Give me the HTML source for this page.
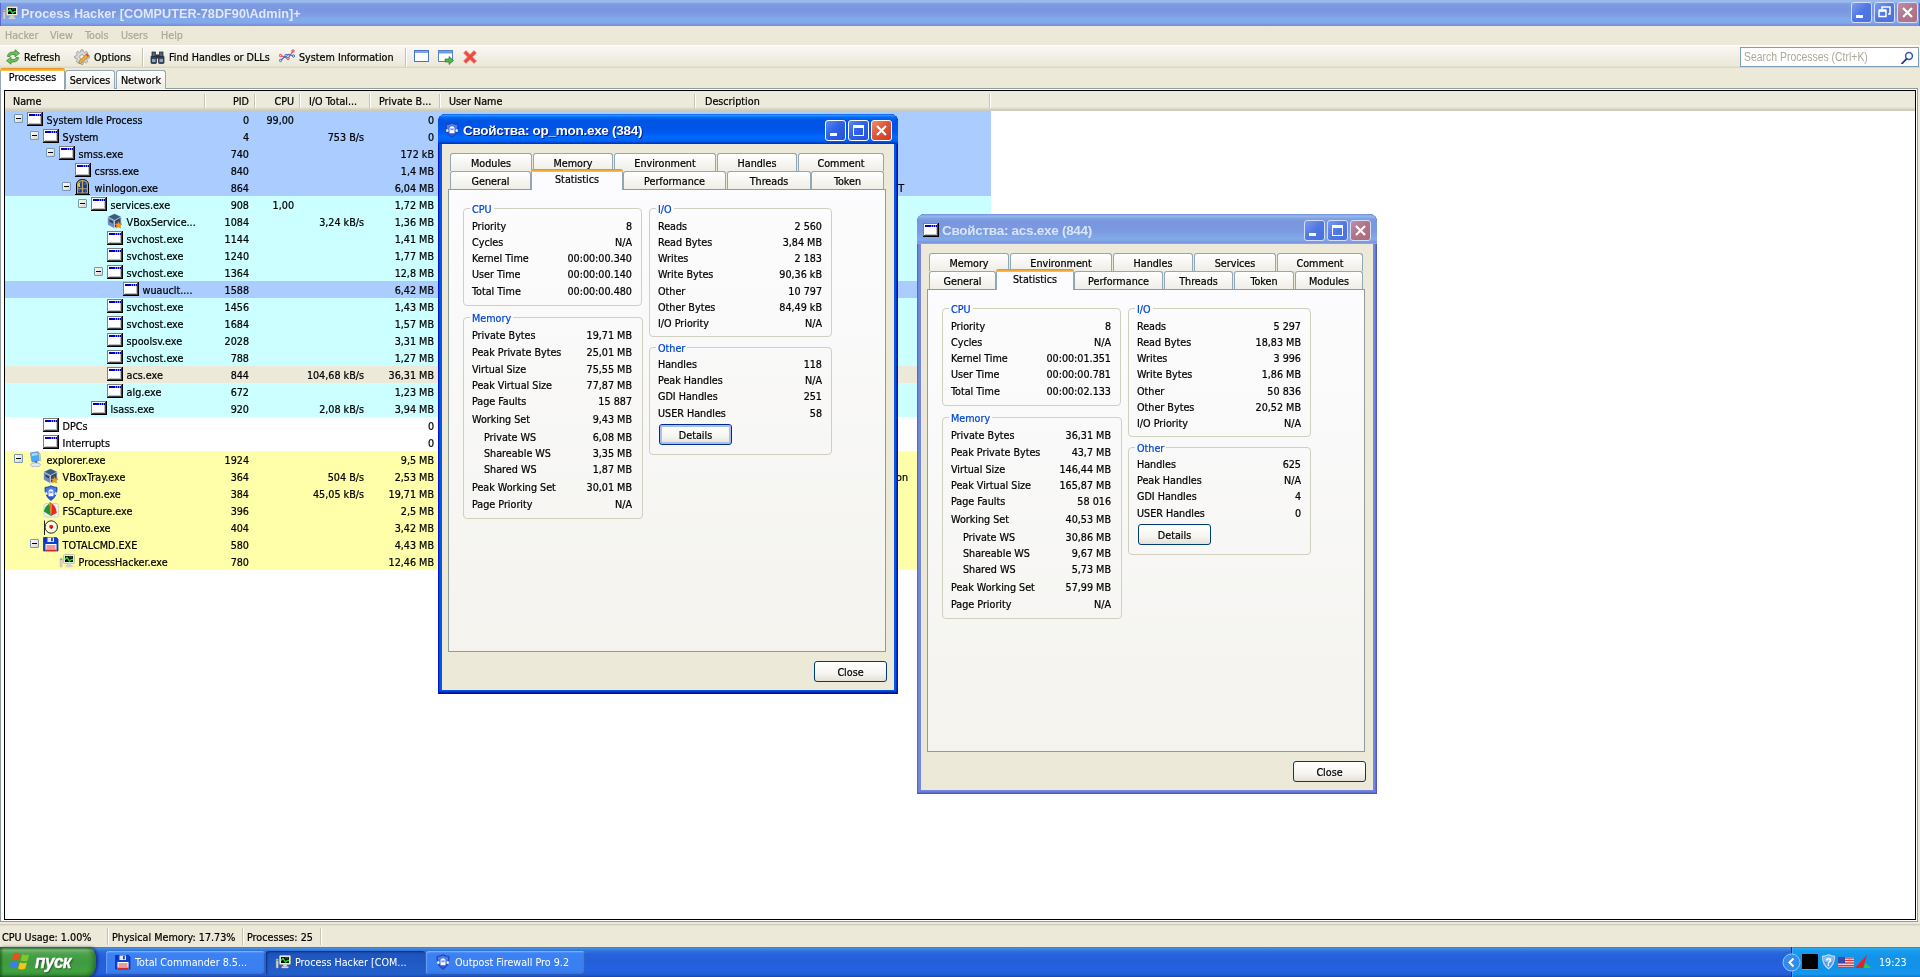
<!DOCTYPE html>
<html lang="ru"><head><meta charset="utf-8"><title>Process Hacker</title>
<style>
*{box-sizing:border-box;margin:0;padding:0}
html,body{width:1920px;height:977px;overflow:hidden}
body{background:#ece9d8;font:10.7px "DejaVu Sans Condensed","Liberation Sans",sans-serif;color:#000;position:relative;cursor:default;-webkit-text-stroke:.22px currentColor}
i{font-style:normal}
svg{display:block}
.abs{position:absolute}
#root{position:absolute;left:0;top:0;width:1920px;height:977px;will-change:transform}
#title{position:absolute;left:0;top:0;width:1920px;height:26px;background:linear-gradient(#9ab4ea 0,#9ebdeb 6%,#8db3ea 10%,#7f9fe5 14%,#7c99e1 22%,#7a96df 40%,#7e9be3 55%,#80a3e7 65%,#82a9ea 72%,#82a9ea 86%,#7f9fe7 91%,#7a93df 95%,#708cdf 100%)}
#title .ti{position:absolute;left:2px;top:5px}
#title .tt{position:absolute;left:21px;top:5px;-webkit-text-stroke:0;font:bold 12.7px/18px "Liberation Sans",sans-serif;color:#dfe7fa;white-space:nowrap}
.cb{position:absolute;top:6px;width:21px;height:21px;border:1px solid #fff;border-radius:3px;background:linear-gradient(135deg,#5b8af2 0,#2f62e6 45%,#2552d6 100%)}
.cb.cl{background:linear-gradient(135deg,#f0906c 0,#e0553a 45%,#c93a20 100%)}
.cb.cl svg{position:absolute;left:-1px;top:-1px}
.cb.mn i{position:absolute;left:4px;top:12px;width:7px;height:3px;background:#fff}
.cb.mx i{position:absolute;left:4px;top:4px;width:11px;height:11px;border:1px solid #fff;border-top-width:3px}
#title .cb{top:2px;border-color:#d4ddf6;background:linear-gradient(135deg,#7c9bee 0,#4f78e4 50%,#4a70dc 100%)}
#title .cb.cl{background:linear-gradient(135deg,#bd8ea6 0,#b0778a 50%,#b07080 100%)}
#menu{position:absolute;left:0;top:26px;width:1920px;height:19px;background:#ece9d8;color:#aca899;line-height:19px}
#menu span{position:absolute;top:0}
#toolbar{position:absolute;left:0;top:45px;width:1920px;height:23px;background:linear-gradient(#fff 0,#f8f7f2 8%,#f1efe5 50%,#ece9d8 90%,#d5d2c3 100%)}
#toolbar .ic{position:absolute;top:4px}
#toolbar .tx{position:absolute;top:4px;line-height:17px;white-space:nowrap}
#toolbar .sep{position:absolute;top:3px;width:2px;height:19px;border-left:1px solid #c5c2b2;border-right:1px solid #fff}
#search{position:absolute;left:1740px;top:47px;width:179px;height:20px;background:#fff;border:1px solid #7f9db9;color:#aca899;font:12.500px/19px "Liberation Sans",sans-serif;padding-left:3px;white-space:nowrap;-webkit-text-stroke:0}
#search span{display:inline-block;transform-origin:0 50%;transform:scaleX(.835)}
#search svg{position:absolute;left:160px;top:3px}
.mtab{position:absolute;top:70px;height:19px;border:1px solid #91a7b4;border-bottom:none;border-radius:3px 3px 0 0;background:linear-gradient(#fff,#f5f4ef 60%,#ecebe6);text-align:center;line-height:20px}
#mpane{position:absolute;left:0;top:88px;width:1918px;height:834px;background:#fff;border:1px solid #919b9c;border-right-color:#919b9c}
.mtab.sel{top:68px;height:22px;background:#fff;border-top:none;line-height:20px}
.mtab.sel:before{content:"";position:absolute;left:-1px;right:-1px;top:0;height:3px;border-radius:3px 3px 0 0;background:linear-gradient(#e68b2c,#ffc73c)}
#tree{position:absolute;left:4px;top:90px;width:1912px;height:830px;border:1px solid #000;background:#fff;overflow:hidden}
#hdr{position:absolute;left:0;top:0;width:1910px;height:20px;background:linear-gradient(#ebeadb 0,#ebeadb 80%,#e2decd 85%,#d6d2c2 92%,#cbc7b8 100%);line-height:21px}
#hdr span{position:absolute;top:2px;line-height:17px;white-space:nowrap}
#hdr i{position:absolute;top:3px;width:2px;height:14px;border-left:1px solid #c7c5b2;border-right:1px solid #fff}
.row{position:absolute;left:0;width:986px;height:17px;line-height:17px;white-space:nowrap}
.row span{position:absolute;top:1px;line-height:17px}
.row .ic{top:0}
.row .r{text-align:right}
.pm{position:absolute;top:3px;width:9px;height:9px;border:1px solid #7898b5;border-radius:1px;background:linear-gradient(135deg,#fff,#d8d4c4)}
.pm:after{content:"";position:absolute;left:1px;top:3px;width:5px;height:1px;background:#000}
#status{position:absolute;left:0;top:924px;width:1920px;height:23px;background:linear-gradient(#c5c2b2 0,#ece9d8 2px,#ece9d8 100%)}
#status span{position:absolute;top:5px;line-height:17px;white-space:nowrap}
#status i{position:absolute;top:4px;width:2px;height:17px;border-left:1px solid #c5c2b2;border-right:1px solid #fff}
#taskbar{-webkit-text-stroke:0;position:absolute;left:0;top:947px;width:1920px;height:30px;background:linear-gradient(#3168d5 0,#4993e6 3%,#3a80e0 8%,#2b71dd 14%,#2663da 25%,#245edb 50%,#2562df 75%,#245ddb 90%,#1f52c3 96%,#1941a5 100%)}
#start{position:absolute;left:0;top:0;width:96px;height:30px;border-radius:0 7px 8px 0/0 13px 15px 0;background:linear-gradient(#2f7d2f 0,#4a9a4a 5%,#78b878 11%,#5aa85a 17%,#44a044 28%,#3f9b3f 55%,#41a241 80%,#3a933a 92%,#2c782c 100%);box-shadow:inset -3px 0 4px rgba(0,40,0,.35),inset 2px 0 2px rgba(0,50,0,.4),2px 0 3px rgba(0,0,60,.5)}
#start .tx{position:absolute;left:35px;top:1px;font:italic bold 19px/28px "Liberation Sans",sans-serif;color:#fff;-webkit-text-stroke:.4px #fff;text-shadow:1px 1px 2px #1c4a1c;letter-spacing:-.6px;transform-origin:0 50%;transform:scaleX(.9)}
.tbn{position:absolute;top:4px;height:24px;width:159px;border-radius:3px;background:linear-gradient(#5b9bf3 0,#3c81f3 12%,#3a7ff1 80%,#3273e0 100%);box-shadow:inset 1px 1px 1px rgba(255,255,255,.25),inset -1px -1px 1px rgba(0,0,60,.25);color:#fff;line-height:24px;white-space:nowrap}
.tbn.on{background:linear-gradient(#1c52b8 0,#1e56c0 20%,#2360cc 100%);box-shadow:inset 1px 1px 2px rgba(0,0,40,.5)}
.tbn .ic{position:absolute;left:9px;top:3px}
.tbn .tx{position:absolute;left:29px;top:0}
#tray{position:absolute;left:1791px;top:0;width:129px;height:30px;border-left:1px solid #0a3a9a;background:linear-gradient(#1682d8 0,#2aa8f4 5%,#1a9cee 12%,#1394ea 30%,#1292e8 70%,#1498ee 90%,#0e78cc 100%);box-shadow:inset 1px 0 0 #3aa8f4}
#clock{position:absolute;left:1879px;top:7px;color:#fff;line-height:18px}
/* dialogs */
.dlg{position:absolute;width:460px;height:580px;border-radius:8px 8px 0 0;overflow:hidden}
.dlg.act{background:#0855dd;box-shadow:inset 0 -1px 0 #00138c,inset 1px 0 0 #0019cf,inset -1px 0 0 #00138c,inset 0 -2px 0 #001fb0,inset 0 -3px 0 #0038d8,inset 2px 0 0 #0845d8,inset -2px 0 0 #0031c8}
.dlg.ina{background:#7488de;box-shadow:inset 0 -1px 0 #5058c6,inset 1px 0 0 #5a66ca,inset -1px 0 0 #5058c6,inset 0 -2px 0 #5f6cd2,inset 0 -3px 0 #6c7eda,inset 2px 0 0 #6e82dc,inset -2px 0 0 #6272d4}
.dlg .tb{position:absolute;left:0;top:0;width:460px;height:30px}
.dlg.act .tb{background:linear-gradient(#0058ee 0,#3593ff 4%,#288eff 6%,#127dff 8%,#036ffc 10%,#0262ee 14%,#0057e5 20%,#0054e3 24%,#0055eb 56%,#005bf5 66%,#026afe 76%,#0064f4 88%,#0056e2 93%,#0038c8 97%,#002fc0 100%)}
.dlg.ina .tb{background:linear-gradient(#7697e7 0,#7e9ee3 3%,#94afe8 6%,#97b4e9 8%,#82a5e4 14%,#7c9fe2 17%,#7996de 25%,#7b99e1 56%,#82a9e9 81%,#80a5e7 89%,#7b96e1 94%,#7a93df 97%,#abbae3 100%)}
.dlg .ti{position:absolute;left:6px;top:8px}
.dlg .tt{position:absolute;left:25px;top:8px;-webkit-text-stroke:0;font:bold 13.500px/18px "Liberation Sans",sans-serif;letter-spacing:-.28px;color:#fff;white-space:nowrap;text-shadow:1px 1px 0 #0a1883}
.dlg.ina .tt{color:#d8e4f8;text-shadow:none}
.dlg.ina .cb{border-color:#d4ddf6;background:linear-gradient(135deg,#7c9bee 0,#4f78e4 50%,#4a70dc 100%)}
.dlg.ina .cb.cl{background:linear-gradient(135deg,#be92a8 0,#b07488 45%,#b06a78 100%)}
.dlg .cli{position:absolute;left:4px;top:30px;width:452px;height:546px;background:#ece9d8}
.tab{position:absolute;height:18px;border:1px solid #91a7b4;border-bottom:none;border-radius:3px 3px 0 0;background:linear-gradient(#fff,#f7f6f2 50%,#eeede7);text-align:center;line-height:20px;white-space:nowrap;overflow:hidden}
.tab.seltab{height:21px;background:#fcfcfe;border-top:none;line-height:21px;z-index:2;overflow:visible}
.tab.lo{height:18px;line-height:19px}
.tab.seltab:before{content:"";position:absolute;left:-1px;right:-1px;top:0;height:3px;border-radius:3px 3px 0 0;background:linear-gradient(#e68b2c,#ffc73c)}
.pane{position:absolute;border:1px solid #919b9c;background:linear-gradient(#fcfcfe,#f4f3ee);box-sizing:content-box}
.gb{position:absolute;border:1px solid #d0d0bf;border-radius:4px;margin:0;padding:0 0 0 6px;min-width:0}
.gb legend{color:#0046d5;padding:2px 2px 0 2px;line-height:13px;height:15px;white-space:nowrap}
.gl{position:absolute;color:#0046d5;background:#f9f9f7;height:14px;line-height:14px;padding-left:2px;white-space:nowrap}
.sl,.sv{position:absolute;line-height:16px;white-space:nowrap}
.sv{width:120px;text-align:right}
.btn{position:absolute;height:19px;border:1px solid #003c74;border-radius:3px;background:linear-gradient(#fff 0,#f6f5f0 60%,#e4e1d4 100%);text-align:center;line-height:21px;box-sizing:content-box}
.btn.def{box-shadow:inset 0 0 0 2px #a8c0f0;border-color:#002c8a}
</style></head><body><div id="root">
<div id="title"><i class="abs" style="left:0;top:3px;width:1px;height:23px;background:#5c68d0"></i><i class="abs" style="left:1919px;top:3px;width:1px;height:23px;background:#5c68d0"></i><span class="ti"><svg width="16" height="16" viewBox="0 0 16 16"><rect x="4.500" y="1.500" width="11" height="9" rx="1" fill="#ece8da" stroke="#b8b4a4" stroke-width=".8"/><rect x="6" y="3" width="8" height="6" fill="#000"/><path d="M6 6.500l2-2 2.500 3.500 2-1.500h1.500" stroke="#18e028" stroke-width="1.500" fill="none"/><rect x="10" y="3.500" width="3.500" height="1" fill="#667"/><path d="M8.500 10.500h3l.8 2h-4.600z" fill="#dcd8c8"/><rect x="6.500" y="12.500" width="7" height="1.500" rx=".7" fill="#e4e0d0" stroke="#b8b4a4" stroke-width=".4"/><rect x="1.200" y="5" width="2" height="9" rx=".5" fill="#e0dccc" stroke="#a8a494" stroke-width=".5"/><rect x="1.500" y="6" width="1.500" height="1" fill="#28c838"/></svg></span><span class="tt">Process Hacker [COMPUTER-78DF90\Admin]+</span>
<span class="cb mn" style="left:1851px"><i></i></span><span class="cb rs" style="left:1874px"><svg width="21" height="21" viewBox="0 0 21 21" style="position:absolute;left:-1px;top:-1px"><path d="M8 7V5h8v7h-2" fill="none" stroke="#fff" stroke-width="1.500"/><rect x="5" y="8.500" width="7" height="6" fill="none" stroke="#fff" stroke-width="1.500"/><path d="M5 8.500h7" stroke="#fff" stroke-width="2.500"/></svg></span><span class="cb cl" style="left:1897px"><svg width="21" height="21" viewBox="0 0 21 21"><path d="M6 6l9 9M15 6l-9 9" stroke="#fff" stroke-width="2.200"/></svg></span></div>
<div id="menu"><span style="left:5px">Hacker</span><span style="left:50px">View</span><span style="left:85px">Tools</span><span style="left:121px">Users</span><span style="left:161px">Help</span></div>
<div id="toolbar">
<span class="ic" style="left:5px"><svg width="16" height="16" viewBox="0 0 16 16"><path d="M2.500 7.500C2.500 4.500 5 3 7.500 3H10V.8L14.500 4.300 10 7.800V5.500H7.500C6 5.500 5 6.300 5 7.500z" fill="#6fbf5f" stroke="#3b8a34" stroke-width=".8"/><path d="M13.500 8.500c0 3-2.500 4.500-5 4.500H6v2.200L1.500 11.700 6 8.200v2.300h2.500c1.500 0 2.500-.8 2.500-2z" fill="#6fbf5f" stroke="#3b8a34" stroke-width=".8"/></svg></span><span class="tx" style="left:24px">Refresh</span>
<span class="ic" style="left:74px"><svg width="16" height="16" viewBox="0 0 16 16"><path d="M7 .8h2l.4 1.900 1.300.6 1.700-1 1.400 1.400-1 1.700.6 1.300 1.900.4v2l-1.900.4-.6 1.300 1 1.700-1.400 1.400-1.700-1-1.300.6-.4 1.900H7l-.4-1.900-1.300-.6-1.700 1-1.400-1.400 1-1.700-.6-1.300L.700 9.100v-2l1.900-.4.600-1.300-1-1.700 1.400-1.400 1.700 1 1.300-.6z" fill="#d8d8d8" stroke="#8a8a8a" stroke-width=".7"/><circle cx="8" cy="8" r="2.300" fill="#f4f4f4" stroke="#8a8a8a" stroke-width=".7"/><path d="M5 14.500l1-3 7-7 2 2-7 7z" fill="#f5b12e" stroke="#a8660a" stroke-width=".7"/><path d="M5 14.500l1-3 2 2z" fill="#f9e3b0" stroke="#a8660a" stroke-width=".5"/><path d="M12.300 5.200l2 2" stroke="#d04a3a" stroke-width="1.600"/></svg></span><span class="tx" style="left:94px">Options</span>
<i class="sep" style="left:142px"></i>
<span class="ic" style="left:150px;top:5px"><svg width="15" height="15" viewBox="0 0 15 15"><rect x="1" y="6" width="5.500" height="7.500" rx="1" fill="#3a4658" stroke="#1a2230" stroke-width=".7"/><rect x="8.500" y="6" width="5.500" height="7.500" rx="1" fill="#3a4658" stroke="#1a2230" stroke-width=".7"/><rect x="2" y="2" width="3.500" height="4.500" fill="#566274" stroke="#1a2230" stroke-width=".7"/><rect x="9.500" y="2" width="3.500" height="4.500" fill="#566274" stroke="#1a2230" stroke-width=".7"/><rect x="6" y="4.500" width="3" height="4" fill="#2a3444"/><rect x="2" y="9" width="3.500" height="3" fill="#7fa6d8"/><rect x="9.500" y="9" width="3.500" height="3" fill="#7fa6d8"/></svg></span><span class="tx" style="left:169px">Find Handles or DLLs</span>
<span class="ic" style="left:279px"><svg width="16" height="16" viewBox="0 0 16 16"><path d="M1.500 6.500L6.500 8.500 9 9.500 14 2" stroke="#e0453a" stroke-width="1.200" fill="none"/><path d="M1.500 11.500L7 6.500 9.500 5.500 14.500 7" stroke="#3b6fd0" stroke-width="1.200" fill="none"/><circle cx="1.500" cy="6.500" r="1.200" fill="#fbd" stroke="#d8302a" stroke-width=".8"/><circle cx="9" cy="9.500" r="1.200" fill="#fbd" stroke="#d8302a" stroke-width=".8"/><circle cx="14" cy="2" r="1.200" fill="#fbd" stroke="#d8302a" stroke-width=".8"/><circle cx="1.500" cy="11.500" r="1.200" fill="#cdf" stroke="#2a5cc0" stroke-width=".8"/><circle cx="7" cy="6.500" r="1.200" fill="#cdf" stroke="#2a5cc0" stroke-width=".8"/><circle cx="14.500" cy="7" r="1.200" fill="#cdf" stroke="#2a5cc0" stroke-width=".8"/></svg></span><span class="tx" style="left:299px">System Information</span>
<i class="sep" style="left:405px"></i>
<span class="ic" style="left:414px"><svg width="16" height="16" viewBox="0 0 16 16"><rect x=".5" y="1.500" width="14" height="11" fill="#fdfdff" stroke="#4a72c8"/><rect x="1" y="2" width="13" height="2" fill="#7fa4ec"/></svg></span><span class="ic" style="left:438px"><svg width="16" height="16" viewBox="0 0 16 16"><rect x=".5" y="1.500" width="14" height="11" fill="#fff" stroke="#5b7fc0"/><rect x="1" y="2" width="13" height="2.500" fill="#6f9be8"/><path d="M7 10h4V7.500l4.500 4-4.500 4V13H7z" fill="#4fb848" stroke="#2a7a28" stroke-width=".7"/></svg></span><span class="ic" style="left:462px"><svg width="16" height="16" viewBox="0 0 16 16"><path d="M1.500 4L4 1.500 8 5.500 12 1.500 14.500 4 10.500 8 14.500 12 12 14.500 8 10.500 4 14.500 1.500 12 5.500 8z" fill="#ee4a40" stroke="#e88" stroke-width=".6"/></svg></span>
</div>
<div id="search"><span>Search Processes (Ctrl+K)</span><svg width="13" height="13" viewBox="0 0 13 13"><circle cx="8" cy="5" r="3.400" fill="#fff" stroke="#2f5bb8" stroke-width="1.500"/><path d="M5.500 7.800L1 12.500" stroke="#1a3a8a" stroke-width="1.800" stroke-linecap="round"/></svg></div>
<div id="mpane"></div>
<span class="mtab" style="left:65px;width:50px">Services</span><span class="mtab" style="left:116px;width:50px">Network</span>
<span class="mtab sel" style="left:0;width:65px">Processes</span>
<div id="tree">
<div id="hdr"><span style="left:8px">Name</span><i style="left:199px"></i><span style="right:1666px">PID</span><i style="left:249px"></i><span style="right:1621px">CPU</span><i style="left:294px"></i><span style="left:304px">I/O Total...</span><i style="left:364px"></i><span style="left:374px">Private B...</span><i style="left:434px"></i><span style="left:444px">User Name</span><i style="left:689px"></i><span style="left:700px">Description</span><i style="left:984px"></i></div>
<div class="row" style="top:20px;background:#aaccff"><i class="pm" style="left:9px"></i><span class="ic" style="left:22px"><svg width="16" height="16" viewBox="0 0 16 16"><rect x="0" y="1" width="16" height="14" fill="#000"/><rect x="0" y="1" width="15" height="13" fill="#808080"/><rect x="1" y="2" width="14" height="12" fill="#404040"/><rect x="1" y="2" width="13" height="11" fill="#fff"/><rect x="2" y="3" width="12" height="10" fill="#c0c0c0"/><rect x="2" y="3" width="11" height="9" fill="#fff"/><rect x="2" y="3" width="12" height="2" fill="#0000c0"/><rect x="8" y="3.500" width="1" height="1" fill="#fff"/><rect x="10" y="3.500" width="1" height="1" fill="#fff"/><rect x="12" y="3.500" width="1" height="1" fill="#fff"/><rect x="0" y="14" width="16" height="1" fill="#000"/></svg></span><span class="nm" style="left:41.6px">System Idle Process</span><span class="r" style="right:742px">0</span><span class="r" style="right:697px">99,00</span><span class="r" style="right:557px">0</span></div>
<div class="row" style="top:37px;background:#aaccff"><i class="pm" style="left:25px"></i><span class="ic" style="left:38px"><svg width="16" height="16" viewBox="0 0 16 16"><rect x="0" y="1" width="16" height="14" fill="#000"/><rect x="0" y="1" width="15" height="13" fill="#808080"/><rect x="1" y="2" width="14" height="12" fill="#404040"/><rect x="1" y="2" width="13" height="11" fill="#fff"/><rect x="2" y="3" width="12" height="10" fill="#c0c0c0"/><rect x="2" y="3" width="11" height="9" fill="#fff"/><rect x="2" y="3" width="12" height="2" fill="#0000c0"/><rect x="8" y="3.500" width="1" height="1" fill="#fff"/><rect x="10" y="3.500" width="1" height="1" fill="#fff"/><rect x="12" y="3.500" width="1" height="1" fill="#fff"/><rect x="0" y="14" width="16" height="1" fill="#000"/></svg></span><span class="nm" style="left:57.6px">System</span><span class="r" style="right:742px">4</span><span class="r" style="right:627px">753 B/s</span><span class="r" style="right:557px">0</span></div>
<div class="row" style="top:54px;background:#aaccff"><i class="pm" style="left:41px"></i><span class="ic" style="left:54px"><svg width="16" height="16" viewBox="0 0 16 16"><rect x="0" y="1" width="16" height="14" fill="#000"/><rect x="0" y="1" width="15" height="13" fill="#808080"/><rect x="1" y="2" width="14" height="12" fill="#404040"/><rect x="1" y="2" width="13" height="11" fill="#fff"/><rect x="2" y="3" width="12" height="10" fill="#c0c0c0"/><rect x="2" y="3" width="11" height="9" fill="#fff"/><rect x="2" y="3" width="12" height="2" fill="#0000c0"/><rect x="8" y="3.500" width="1" height="1" fill="#fff"/><rect x="10" y="3.500" width="1" height="1" fill="#fff"/><rect x="12" y="3.500" width="1" height="1" fill="#fff"/><rect x="0" y="14" width="16" height="1" fill="#000"/></svg></span><span class="nm" style="left:73.6px">smss.exe</span><span class="r" style="right:742px">740</span><span class="r" style="right:557px">172 kB</span></div>
<div class="row" style="top:71px;background:#aaccff"><span class="ic" style="left:70px"><svg width="16" height="16" viewBox="0 0 16 16"><rect x="0" y="1" width="16" height="14" fill="#000"/><rect x="0" y="1" width="15" height="13" fill="#808080"/><rect x="1" y="2" width="14" height="12" fill="#404040"/><rect x="1" y="2" width="13" height="11" fill="#fff"/><rect x="2" y="3" width="12" height="10" fill="#c0c0c0"/><rect x="2" y="3" width="11" height="9" fill="#fff"/><rect x="2" y="3" width="12" height="2" fill="#0000c0"/><rect x="8" y="3.500" width="1" height="1" fill="#fff"/><rect x="10" y="3.500" width="1" height="1" fill="#fff"/><rect x="12" y="3.500" width="1" height="1" fill="#fff"/><rect x="0" y="14" width="16" height="1" fill="#000"/></svg></span><span class="nm" style="left:89.6px">csrss.exe</span><span class="r" style="right:742px">840</span><span class="r" style="right:557px">1,4 MB</span></div>
<div class="row" style="top:88px;background:#aaccff"><i class="pm" style="left:57px"></i><span class="ic" style="left:70px"><svg width="16" height="16" viewBox="0 0 16 16"><path d="M1.500 15V6C1.500 2.500 4 .5 7.500 .5S13.500 2.500 13.500 6V15z" fill="#b8b060" stroke="#000" stroke-width="1"/><path d="M3.200 13.500V6.200C3.200 4 4.600 2.500 6.800 2.200V13.500z" fill="#1a2fa0"/><path d="M8.200 2.200C10.400 2.500 11.800 4 11.800 6.200V13.500H8.200z" fill="#1a2fa0"/><rect x="2.500" y="9.300" width="10" height="1" fill="#b8b060"/><path d="M5.800 3.800A2.300 2.300 0 1 0 5.800 8.200 2.800 2.800 0 0 1 5.800 3.800z" fill="#f4d838"/><rect x="9.500" y="4.500" width="1" height="1" fill="#f4d838"/><rect x="4" y="11" width="1" height="1" fill="#4a8ae0"/><rect x="10" y="11.500" width="1" height="1" fill="#4a8ae0"/><rect x="0" y="15" width="15" height="1" fill="#000"/></svg></span><span class="nm" style="left:89.6px">winlogon.exe</span><span class="r" style="right:742px">864</span><span class="r" style="right:557px">6,04 MB</span><span class="r" style="right:87px">NT</span></div>
<div class="row" style="top:105px;background:#ccffff"><i class="pm" style="left:73px"></i><span class="ic" style="left:86px"><svg width="16" height="16" viewBox="0 0 16 16"><rect x="0" y="1" width="16" height="14" fill="#000"/><rect x="0" y="1" width="15" height="13" fill="#808080"/><rect x="1" y="2" width="14" height="12" fill="#404040"/><rect x="1" y="2" width="13" height="11" fill="#fff"/><rect x="2" y="3" width="12" height="10" fill="#c0c0c0"/><rect x="2" y="3" width="11" height="9" fill="#fff"/><rect x="2" y="3" width="12" height="2" fill="#0000c0"/><rect x="8" y="3.500" width="1" height="1" fill="#fff"/><rect x="10" y="3.500" width="1" height="1" fill="#fff"/><rect x="12" y="3.500" width="1" height="1" fill="#fff"/><rect x="0" y="14" width="16" height="1" fill="#000"/></svg></span><span class="nm" style="left:105.6px">services.exe</span><span class="r" style="right:742px">908</span><span class="r" style="right:697px">1,00</span><span class="r" style="right:557px">1,72 MB</span></div>
<div class="row" style="top:122px;background:#ccffff"><span class="ic" style="left:102px"><svg width="16" height="16" viewBox="0 0 16 16"><path d="M7.500 1L14 4v7.500L7.500 15 1 11.500V4z" fill="#2c4c6c" stroke="#b8c8dc" stroke-width=".9"/><path d="M7.500 1L14 4 7.500 7.500 1 4z" fill="#3a5c80"/><path d="M7.500 7.500V15L1 11.500V4z" fill="#6f8cb4"/><path d="M1 4l6.500 3.500L14 4M7.500 7.500V15" stroke="#d0dcec" stroke-width=".8" fill="none"/><path d="M2.500 6.500l3.500 2v2l-3.500-2z" fill="#243c58"/><path d="M11.500 8.500l1.100 2.300 2.400.2-1.800 1.700.5 2.400-2.200-1.200-2.200 1.200.5-2.400-1.800-1.700 2.400-.2z" fill="#f89a1c" stroke="#c86a00" stroke-width=".4"/></svg></span><span class="nm" style="left:121.6px">VBoxService...</span><span class="r" style="right:742px">1084</span><span class="r" style="right:627px">3,24 kB/s</span><span class="r" style="right:557px">1,36 MB</span></div>
<div class="row" style="top:139px;background:#ccffff"><span class="ic" style="left:102px"><svg width="16" height="16" viewBox="0 0 16 16"><rect x="0" y="1" width="16" height="14" fill="#000"/><rect x="0" y="1" width="15" height="13" fill="#808080"/><rect x="1" y="2" width="14" height="12" fill="#404040"/><rect x="1" y="2" width="13" height="11" fill="#fff"/><rect x="2" y="3" width="12" height="10" fill="#c0c0c0"/><rect x="2" y="3" width="11" height="9" fill="#fff"/><rect x="2" y="3" width="12" height="2" fill="#0000c0"/><rect x="8" y="3.500" width="1" height="1" fill="#fff"/><rect x="10" y="3.500" width="1" height="1" fill="#fff"/><rect x="12" y="3.500" width="1" height="1" fill="#fff"/><rect x="0" y="14" width="16" height="1" fill="#000"/></svg></span><span class="nm" style="left:121.6px">svchost.exe</span><span class="r" style="right:742px">1144</span><span class="r" style="right:557px">1,41 MB</span></div>
<div class="row" style="top:156px;background:#ccffff"><span class="ic" style="left:102px"><svg width="16" height="16" viewBox="0 0 16 16"><rect x="0" y="1" width="16" height="14" fill="#000"/><rect x="0" y="1" width="15" height="13" fill="#808080"/><rect x="1" y="2" width="14" height="12" fill="#404040"/><rect x="1" y="2" width="13" height="11" fill="#fff"/><rect x="2" y="3" width="12" height="10" fill="#c0c0c0"/><rect x="2" y="3" width="11" height="9" fill="#fff"/><rect x="2" y="3" width="12" height="2" fill="#0000c0"/><rect x="8" y="3.500" width="1" height="1" fill="#fff"/><rect x="10" y="3.500" width="1" height="1" fill="#fff"/><rect x="12" y="3.500" width="1" height="1" fill="#fff"/><rect x="0" y="14" width="16" height="1" fill="#000"/></svg></span><span class="nm" style="left:121.6px">svchost.exe</span><span class="r" style="right:742px">1240</span><span class="r" style="right:557px">1,77 MB</span></div>
<div class="row" style="top:173px;background:#ccffff"><i class="pm" style="left:89px"></i><span class="ic" style="left:102px"><svg width="16" height="16" viewBox="0 0 16 16"><rect x="0" y="1" width="16" height="14" fill="#000"/><rect x="0" y="1" width="15" height="13" fill="#808080"/><rect x="1" y="2" width="14" height="12" fill="#404040"/><rect x="1" y="2" width="13" height="11" fill="#fff"/><rect x="2" y="3" width="12" height="10" fill="#c0c0c0"/><rect x="2" y="3" width="11" height="9" fill="#fff"/><rect x="2" y="3" width="12" height="2" fill="#0000c0"/><rect x="8" y="3.500" width="1" height="1" fill="#fff"/><rect x="10" y="3.500" width="1" height="1" fill="#fff"/><rect x="12" y="3.500" width="1" height="1" fill="#fff"/><rect x="0" y="14" width="16" height="1" fill="#000"/></svg></span><span class="nm" style="left:121.6px">svchost.exe</span><span class="r" style="right:742px">1364</span><span class="r" style="right:557px">12,8 MB</span></div>
<div class="row" style="top:190px;background:#aaccff"><span class="ic" style="left:118px"><svg width="16" height="16" viewBox="0 0 16 16"><rect x="0" y="1" width="16" height="14" fill="#000"/><rect x="0" y="1" width="15" height="13" fill="#808080"/><rect x="1" y="2" width="14" height="12" fill="#404040"/><rect x="1" y="2" width="13" height="11" fill="#fff"/><rect x="2" y="3" width="12" height="10" fill="#c0c0c0"/><rect x="2" y="3" width="11" height="9" fill="#fff"/><rect x="2" y="3" width="12" height="2" fill="#0000c0"/><rect x="8" y="3.500" width="1" height="1" fill="#fff"/><rect x="10" y="3.500" width="1" height="1" fill="#fff"/><rect x="12" y="3.500" width="1" height="1" fill="#fff"/><rect x="0" y="14" width="16" height="1" fill="#000"/></svg></span><span class="nm" style="left:137.6px">wuauclt....</span><span class="r" style="right:742px">1588</span><span class="r" style="right:557px">6,42 MB</span></div>
<div class="row" style="top:207px;background:#ccffff"><span class="ic" style="left:102px"><svg width="16" height="16" viewBox="0 0 16 16"><rect x="0" y="1" width="16" height="14" fill="#000"/><rect x="0" y="1" width="15" height="13" fill="#808080"/><rect x="1" y="2" width="14" height="12" fill="#404040"/><rect x="1" y="2" width="13" height="11" fill="#fff"/><rect x="2" y="3" width="12" height="10" fill="#c0c0c0"/><rect x="2" y="3" width="11" height="9" fill="#fff"/><rect x="2" y="3" width="12" height="2" fill="#0000c0"/><rect x="8" y="3.500" width="1" height="1" fill="#fff"/><rect x="10" y="3.500" width="1" height="1" fill="#fff"/><rect x="12" y="3.500" width="1" height="1" fill="#fff"/><rect x="0" y="14" width="16" height="1" fill="#000"/></svg></span><span class="nm" style="left:121.6px">svchost.exe</span><span class="r" style="right:742px">1456</span><span class="r" style="right:557px">1,43 MB</span></div>
<div class="row" style="top:224px;background:#ccffff"><span class="ic" style="left:102px"><svg width="16" height="16" viewBox="0 0 16 16"><rect x="0" y="1" width="16" height="14" fill="#000"/><rect x="0" y="1" width="15" height="13" fill="#808080"/><rect x="1" y="2" width="14" height="12" fill="#404040"/><rect x="1" y="2" width="13" height="11" fill="#fff"/><rect x="2" y="3" width="12" height="10" fill="#c0c0c0"/><rect x="2" y="3" width="11" height="9" fill="#fff"/><rect x="2" y="3" width="12" height="2" fill="#0000c0"/><rect x="8" y="3.500" width="1" height="1" fill="#fff"/><rect x="10" y="3.500" width="1" height="1" fill="#fff"/><rect x="12" y="3.500" width="1" height="1" fill="#fff"/><rect x="0" y="14" width="16" height="1" fill="#000"/></svg></span><span class="nm" style="left:121.6px">svchost.exe</span><span class="r" style="right:742px">1684</span><span class="r" style="right:557px">1,57 MB</span></div>
<div class="row" style="top:241px;background:#ccffff"><span class="ic" style="left:102px"><svg width="16" height="16" viewBox="0 0 16 16"><rect x="0" y="1" width="16" height="14" fill="#000"/><rect x="0" y="1" width="15" height="13" fill="#808080"/><rect x="1" y="2" width="14" height="12" fill="#404040"/><rect x="1" y="2" width="13" height="11" fill="#fff"/><rect x="2" y="3" width="12" height="10" fill="#c0c0c0"/><rect x="2" y="3" width="11" height="9" fill="#fff"/><rect x="2" y="3" width="12" height="2" fill="#0000c0"/><rect x="8" y="3.500" width="1" height="1" fill="#fff"/><rect x="10" y="3.500" width="1" height="1" fill="#fff"/><rect x="12" y="3.500" width="1" height="1" fill="#fff"/><rect x="0" y="14" width="16" height="1" fill="#000"/></svg></span><span class="nm" style="left:121.6px">spoolsv.exe</span><span class="r" style="right:742px">2028</span><span class="r" style="right:557px">3,31 MB</span></div>
<div class="row" style="top:258px;background:#ccffff"><span class="ic" style="left:102px"><svg width="16" height="16" viewBox="0 0 16 16"><rect x="0" y="1" width="16" height="14" fill="#000"/><rect x="0" y="1" width="15" height="13" fill="#808080"/><rect x="1" y="2" width="14" height="12" fill="#404040"/><rect x="1" y="2" width="13" height="11" fill="#fff"/><rect x="2" y="3" width="12" height="10" fill="#c0c0c0"/><rect x="2" y="3" width="11" height="9" fill="#fff"/><rect x="2" y="3" width="12" height="2" fill="#0000c0"/><rect x="8" y="3.500" width="1" height="1" fill="#fff"/><rect x="10" y="3.500" width="1" height="1" fill="#fff"/><rect x="12" y="3.500" width="1" height="1" fill="#fff"/><rect x="0" y="14" width="16" height="1" fill="#000"/></svg></span><span class="nm" style="left:121.6px">svchost.exe</span><span class="r" style="right:742px">788</span><span class="r" style="right:557px">1,27 MB</span></div>
<div class="row" style="top:275px;background:#ece9d8"><span class="ic" style="left:102px"><svg width="16" height="16" viewBox="0 0 16 16"><rect x="0" y="1" width="16" height="14" fill="#000"/><rect x="0" y="1" width="15" height="13" fill="#808080"/><rect x="1" y="2" width="14" height="12" fill="#404040"/><rect x="1" y="2" width="13" height="11" fill="#fff"/><rect x="2" y="3" width="12" height="10" fill="#c0c0c0"/><rect x="2" y="3" width="11" height="9" fill="#fff"/><rect x="2" y="3" width="12" height="2" fill="#0000c0"/><rect x="8" y="3.500" width="1" height="1" fill="#fff"/><rect x="10" y="3.500" width="1" height="1" fill="#fff"/><rect x="12" y="3.500" width="1" height="1" fill="#fff"/><rect x="0" y="14" width="16" height="1" fill="#000"/></svg></span><span class="nm" style="left:121.6px">acs.exe</span><span class="r" style="right:742px">844</span><span class="r" style="right:627px">104,68 kB/s</span><span class="r" style="right:557px">36,31 MB</span></div>
<div class="row" style="top:292px;background:#ccffff"><span class="ic" style="left:102px"><svg width="16" height="16" viewBox="0 0 16 16"><rect x="0" y="1" width="16" height="14" fill="#000"/><rect x="0" y="1" width="15" height="13" fill="#808080"/><rect x="1" y="2" width="14" height="12" fill="#404040"/><rect x="1" y="2" width="13" height="11" fill="#fff"/><rect x="2" y="3" width="12" height="10" fill="#c0c0c0"/><rect x="2" y="3" width="11" height="9" fill="#fff"/><rect x="2" y="3" width="12" height="2" fill="#0000c0"/><rect x="8" y="3.500" width="1" height="1" fill="#fff"/><rect x="10" y="3.500" width="1" height="1" fill="#fff"/><rect x="12" y="3.500" width="1" height="1" fill="#fff"/><rect x="0" y="14" width="16" height="1" fill="#000"/></svg></span><span class="nm" style="left:121.6px">alg.exe</span><span class="r" style="right:742px">672</span><span class="r" style="right:557px">1,23 MB</span></div>
<div class="row" style="top:309px;background:#ccffff"><span class="ic" style="left:86px"><svg width="16" height="16" viewBox="0 0 16 16"><rect x="0" y="1" width="16" height="14" fill="#000"/><rect x="0" y="1" width="15" height="13" fill="#808080"/><rect x="1" y="2" width="14" height="12" fill="#404040"/><rect x="1" y="2" width="13" height="11" fill="#fff"/><rect x="2" y="3" width="12" height="10" fill="#c0c0c0"/><rect x="2" y="3" width="11" height="9" fill="#fff"/><rect x="2" y="3" width="12" height="2" fill="#0000c0"/><rect x="8" y="3.500" width="1" height="1" fill="#fff"/><rect x="10" y="3.500" width="1" height="1" fill="#fff"/><rect x="12" y="3.500" width="1" height="1" fill="#fff"/><rect x="0" y="14" width="16" height="1" fill="#000"/></svg></span><span class="nm" style="left:105.6px">lsass.exe</span><span class="r" style="right:742px">920</span><span class="r" style="right:627px">2,08 kB/s</span><span class="r" style="right:557px">3,94 MB</span></div>
<div class="row" style="top:326px;background:#ffffff"><span class="ic" style="left:38px"><svg width="16" height="16" viewBox="0 0 16 16"><rect x="0" y="1" width="16" height="14" fill="#000"/><rect x="0" y="1" width="15" height="13" fill="#808080"/><rect x="1" y="2" width="14" height="12" fill="#404040"/><rect x="1" y="2" width="13" height="11" fill="#fff"/><rect x="2" y="3" width="12" height="10" fill="#c0c0c0"/><rect x="2" y="3" width="11" height="9" fill="#fff"/><rect x="2" y="3" width="12" height="2" fill="#0000c0"/><rect x="8" y="3.500" width="1" height="1" fill="#fff"/><rect x="10" y="3.500" width="1" height="1" fill="#fff"/><rect x="12" y="3.500" width="1" height="1" fill="#fff"/><rect x="0" y="14" width="16" height="1" fill="#000"/></svg></span><span class="nm" style="left:57.6px">DPCs</span><span class="r" style="right:557px">0</span></div>
<div class="row" style="top:343px;background:#ffffff"><span class="ic" style="left:38px"><svg width="16" height="16" viewBox="0 0 16 16"><rect x="0" y="1" width="16" height="14" fill="#000"/><rect x="0" y="1" width="15" height="13" fill="#808080"/><rect x="1" y="2" width="14" height="12" fill="#404040"/><rect x="1" y="2" width="13" height="11" fill="#fff"/><rect x="2" y="3" width="12" height="10" fill="#c0c0c0"/><rect x="2" y="3" width="11" height="9" fill="#fff"/><rect x="2" y="3" width="12" height="2" fill="#0000c0"/><rect x="8" y="3.500" width="1" height="1" fill="#fff"/><rect x="10" y="3.500" width="1" height="1" fill="#fff"/><rect x="12" y="3.500" width="1" height="1" fill="#fff"/><rect x="0" y="14" width="16" height="1" fill="#000"/></svg></span><span class="nm" style="left:57.6px">Interrupts</span><span class="r" style="right:557px">0</span></div>
<div class="row" style="top:360px;background:#ffffaa"><i class="pm" style="left:9px"></i><span class="ic" style="left:22px"><svg width="16" height="16" viewBox="0 0 16 16"><path d="M3.500 2L11 .8 12.300 9.500 5 10.800z" fill="#3fb0f8" stroke="#6a8cd0" stroke-width=".9"/><path d="M4.500 2.800L10.300 1.800 10.600 4 4.800 5z" fill="#a8e0ff"/><path d="M7.500 10.500l2.500-.5.600 3-2.500.5z" fill="#2a50c8"/><ellipse cx="8.500" cy="13.800" rx="5" ry="2" fill="#e4eaf4" stroke="#98a4bc" stroke-width=".7"/><path d="M11.300 1.500l1.700.6.800 8-1.500-.6z" fill="#c8d4e8" stroke="#8898b8" stroke-width=".5"/></svg></span><span class="nm" style="left:41.6px">explorer.exe</span><span class="r" style="right:742px">1924</span><span class="r" style="right:557px">9,5 MB</span></div>
<div class="row" style="top:377px;background:#ffffaa"><span class="ic" style="left:38px"><svg width="16" height="16" viewBox="0 0 16 16"><path d="M7.500 1L14 4v7.500L7.500 15 1 11.500V4z" fill="#2c4c6c" stroke="#b8c8dc" stroke-width=".9"/><path d="M7.500 1L14 4 7.500 7.500 1 4z" fill="#3a5c80"/><path d="M7.500 7.500V15L1 11.500V4z" fill="#6f8cb4"/><path d="M1 4l6.500 3.500L14 4M7.500 7.500V15" stroke="#d0dcec" stroke-width=".8" fill="none"/><path d="M2.500 6.500l3.500 2v2l-3.500-2z" fill="#243c58"/><path d="M11.500 8.500l1.100 2.300 2.400.2-1.800 1.700.5 2.400-2.200-1.200-2.200 1.200.5-2.400-1.800-1.700 2.400-.2z" fill="#f89a1c" stroke="#c86a00" stroke-width=".4"/></svg></span><span class="nm" style="left:57.6px">VBoxTray.exe</span><span class="r" style="right:742px">364</span><span class="r" style="right:627px">504 B/s</span><span class="r" style="right:557px">2,53 MB</span><span class="r" style="right:83px">Application</span></div>
<div class="row" style="top:394px;background:#ffffaa"><span class="ic" style="left:38px"><svg width="16" height="16" viewBox="0 0 16 16"><path d="M8 .8c2 1 4 1.500 6 1.600.3 5.600-1.500 10-6 13-4.500-3-6.300-7.400-6-13C4 2.300 6 1.800 8 .8z" fill="#2858d8" stroke="#1c3ca0" stroke-width=".8"/><path d="M8 1.800c1.600.8 3.300 1.200 5 1.300 0 1.400-.1 2.700-.4 3.900H3.400C3.100 5.800 3 4.500 3 3.100c1.700-.1 3.400-.5 5-1.300z" fill="#4a7cf0"/><path d="M5.500 11.300V7C5.500 5.300 6.600 4.300 8 4.300s2.500 1 2.500 2.700v4.300z" fill="#fff"/><rect x="6.600" y="6.300" width="1" height="2" fill="#2858d8"/><rect x="8.400" y="6.300" width="1" height="2" fill="#2858d8"/><ellipse cx="3.300" cy="8.600" rx="1.300" ry="1.500" fill="#e8ecf8"/><ellipse cx="12.700" cy="8.600" rx="1.300" ry="1.500" fill="#e8ecf8"/></svg></span><span class="nm" style="left:57.6px">op_mon.exe</span><span class="r" style="right:742px">384</span><span class="r" style="right:627px">45,05 kB/s</span><span class="r" style="right:557px">19,71 MB</span></div>
<div class="row" style="top:411px;background:#ffffaa"><span class="ic" style="left:38px"><svg width="16" height="16" viewBox="0 0 16 16"><rect x="1" y="1.500" width="14.500" height="13.500" rx="2" fill="#f4f2ec" stroke="#c8c4b4" stroke-width=".7"/><path d="M8 14L.8 9.500C1.500 6 3.500 3.200 6.500 1.500z" fill="#189a30"/><path d="M8 14L6.500 1.500c1-.5 1.600-.5 2.200-.3z" fill="#f86a28"/><path d="M8 14L8.700 1.200c3 1.800 4.800 5.800 5 9.800z" fill="#e0301c"/><path d="M6 1l1.500-1 .5 1.500z" fill="#189a30"/></svg></span><span class="nm" style="left:57.6px">FSCapture.exe</span><span class="r" style="right:742px">396</span><span class="r" style="right:557px">2,5 MB</span></div>
<div class="row" style="top:428px;background:#ffffaa"><span class="ic" style="left:38px"><svg width="16" height="16" viewBox="0 0 16 16"><rect x="1" y="1.500" width="1" height="14.500" fill="#222"/><circle cx="8.200" cy="8" r="6.200" fill="#fffce0" stroke="#222" stroke-width="1"/><circle cx="8.200" cy="7.800" r="2" fill="#e81c1c"/><rect x="8" y="8.500" width="1" height="1" fill="#400"/></svg></span><span class="nm" style="left:57.6px">punto.exe</span><span class="r" style="right:742px">404</span><span class="r" style="right:557px">3,42 MB</span></div>
<div class="row" style="top:445px;background:#ffffaa"><i class="pm" style="left:25px"></i><span class="ic" style="left:38px"><svg width="16" height="16" viewBox="0 0 16 16"><path d="M.5 1.500h13l1.500 1.500v12H.5z" fill="#1040d0" stroke="#0a2890" stroke-width=".7"/><rect x="4.500" y="1.500" width="6.500" height="4.500" fill="#e4e8f4"/><rect x="8" y="2" width="1.800" height="3.300" fill="#1c48c8"/><rect x="1.500" y="2" width="1" height="4" fill="#0a2890"/><rect x="2.500" y="8" width="11" height="7" fill="#fff"/><rect x="3.500" y="9.500" width="9" height="1" fill="#e03030"/><rect x="3.500" y="11.500" width="9" height="1" fill="#e03030"/><rect x="2.500" y="13.500" width="11" height="1.500" fill="#d02828"/></svg></span><span class="nm" style="left:57.6px">TOTALCMD.EXE</span><span class="r" style="right:742px">580</span><span class="r" style="right:557px">4,43 MB</span></div>
<div class="row" style="top:462px;background:#ffffaa"><span class="ic" style="left:54px"><svg width="16" height="16" viewBox="0 0 16 16"><rect x="4.500" y="1.500" width="11" height="9" rx="1" fill="#ece8da" stroke="#b8b4a4" stroke-width=".8"/><rect x="6" y="3" width="8" height="6" fill="#000"/><path d="M6 6.500l2-2 2.500 3.500 2-1.500h1.500" stroke="#18e028" stroke-width="1.500" fill="none"/><rect x="10" y="3.500" width="3.500" height="1" fill="#667"/><path d="M8.500 10.500h3l.8 2h-4.600z" fill="#dcd8c8"/><rect x="6.500" y="12.500" width="7" height="1.500" rx=".7" fill="#e4e0d0" stroke="#b8b4a4" stroke-width=".4"/><rect x="1.200" y="5" width="2" height="9" rx=".5" fill="#e0dccc" stroke="#a8a494" stroke-width=".5"/><rect x="1.500" y="6" width="1.500" height="1" fill="#28c838"/></svg></span><span class="nm" style="left:73.6px">ProcessHacker.exe</span><span class="r" style="right:742px">780</span><span class="r" style="right:557px">12,46 MB</span></div>
</div>
<div id="status"><span style="left:2px">CPU Usage: 1.00%</span><i style="left:107px"></i><span style="left:112px">Physical Memory: 17.73%</span><i style="left:242px"></i><span style="left:247px">Processes: 25</span><i style="left:320px"></i></div>
<div id="taskbar">
<div id="start"><svg class="abs" style="left:10px;top:5px" width="21" height="19" viewBox="0 0 18 19" preserveAspectRatio="none"><path d="M3 1.500c2-1 4-1 6 .3L7.500 8C5.500 6.800 3.500 6.800 1.500 7.800z" fill="#e8501c"/><path d="M10.500 2.300c2 1.200 4 1.200 6 .2L15 8.700c-2 1-4 1-6-.2z" fill="#7fc828"/><path d="M1 9.500c2-1 4-1 6 .3L5.500 16c-2-1.200-4-1.200-6-.2z" fill="#3f7ce8"/><path d="M8.500 10.300c2 1.200 4 1.200 6 .2L13 16.700c-2 1-4 1-6-.2z" fill="#f8c41c"/></svg><span class="tx">пуск</span></div>
<div class="tbn" style="left:106px"><span class="ic"><svg width="16" height="16" viewBox="0 0 16 16"><path d="M.5 1.500h13l1.500 1.500v12H.5z" fill="#1040d0" stroke="#0a2890" stroke-width=".7"/><rect x="4.500" y="1.500" width="6.500" height="4.500" fill="#e4e8f4"/><rect x="8" y="2" width="1.800" height="3.300" fill="#1c48c8"/><rect x="1.500" y="2" width="1" height="4" fill="#0a2890"/><rect x="2.500" y="8" width="11" height="7" fill="#fff"/><rect x="3.500" y="9.500" width="9" height="1" fill="#e03030"/><rect x="3.500" y="11.500" width="9" height="1" fill="#e03030"/><rect x="2.500" y="13.500" width="11" height="1.500" fill="#d02828"/></svg></span><span class="tx">Total Commander 8.5...</span></div>
<div class="tbn on" style="left:266px"><span class="ic"><svg width="16" height="16" viewBox="0 0 16 16"><rect x="4.500" y="1.500" width="11" height="9" rx="1" fill="#ece8da" stroke="#b8b4a4" stroke-width=".8"/><rect x="6" y="3" width="8" height="6" fill="#000"/><path d="M6 6.500l2-2 2.500 3.500 2-1.500h1.500" stroke="#18e028" stroke-width="1.500" fill="none"/><rect x="10" y="3.500" width="3.500" height="1" fill="#667"/><path d="M8.500 10.500h3l.8 2h-4.600z" fill="#dcd8c8"/><rect x="6.500" y="12.500" width="7" height="1.500" rx=".7" fill="#e4e0d0" stroke="#b8b4a4" stroke-width=".4"/><rect x="1.200" y="5" width="2" height="9" rx=".5" fill="#e0dccc" stroke="#a8a494" stroke-width=".5"/><rect x="1.500" y="6" width="1.500" height="1" fill="#28c838"/></svg></span><span class="tx">Process Hacker [COM...</span></div>
<div class="tbn" style="left:426px"><span class="ic"><svg width="16" height="16" viewBox="0 0 16 16"><path d="M8 .8c2 1 4 1.500 6 1.600.3 5.600-1.500 10-6 13-4.500-3-6.300-7.400-6-13C4 2.300 6 1.800 8 .8z" fill="#2858d8" stroke="#1c3ca0" stroke-width=".8"/><path d="M8 1.800c1.600.8 3.300 1.200 5 1.300 0 1.400-.1 2.700-.4 3.900H3.400C3.100 5.800 3 4.500 3 3.100c1.700-.1 3.400-.5 5-1.300z" fill="#4a7cf0"/><path d="M5.500 11.300V7C5.500 5.300 6.600 4.300 8 4.300s2.500 1 2.500 2.700v4.300z" fill="#fff"/><rect x="6.600" y="6.300" width="1" height="2" fill="#2858d8"/><rect x="8.400" y="6.300" width="1" height="2" fill="#2858d8"/><ellipse cx="3.300" cy="8.600" rx="1.300" ry="1.500" fill="#e8ecf8"/><ellipse cx="12.700" cy="8.600" rx="1.300" ry="1.500" fill="#e8ecf8"/></svg></span><span class="tx">Outpost Firewall Pro 9.2</span></div>
<div id="tray"></div>
<svg class="abs" style="left:1782px;top:6px" width="19" height="19" viewBox="0 0 19 19"><circle cx="9.500" cy="9.500" r="8.500" fill="#2f8cf0" stroke="#9cc8f8" stroke-width="1"/><path d="M11.500 5.500l-4 4 4 4" fill="none" stroke="#fff" stroke-width="2"/></svg>
<div class="abs" style="left:1802px;top:7px;width:16px;height:16px;background:#000;border-bottom:1px solid #2fe040"></div>
<svg class="abs" style="left:1821px;top:7px" width="15" height="16" viewBox="0 0 15 16"><path d="M7.500 .8c2 1.100 4 1.500 6 1.500 0 5.500-1.500 9.500-6 12.500C3 11.800 1.500 7.800 1.500 2.300c2 0 4-.4 6-1.500z" fill="#5a9ce4" stroke="#c8dcf4" stroke-width="1.200"/><path d="M7.500 2.200c1.500.8 3 1.100 4.500 1.200-.1 1.600-.3 3-.8 4.300H3.800C3.300 6.400 3.100 5 3 3.400c1.500-.1 3-.4 4.500-1.200z" fill="#8cc0f4"/><text x="7.500" y="11.500" font-family="Liberation Sans,sans-serif" font-size="10" font-weight="bold" fill="#fff" text-anchor="middle">?</text></svg>
<svg class="abs" style="left:1838px;top:10px" width="16" height="11" viewBox="0 0 16 11"><rect width="16" height="11" fill="#fff"/><path d="M0 1h16M0 3.500h16M0 6h16M0 8.500h16M0 10.500h16" stroke="#d83a3a" stroke-width="1.300"/><rect width="7" height="6" fill="#3a4aa8"/></svg>
<svg class="abs" style="left:1855px;top:8px" width="18" height="14" viewBox="0 0 18 14"><path d="M0 13L12 0 8 13z" fill="#e82020"/><path d="M10 8l6 5h-7z" fill="#28d828"/></svg>
<span id="clock">19:23</span>
</div>
<div id="dlg1" class="dlg act" style="left:438px;top:114px"><div class="tb"><span class="ti"><svg width="16" height="16" viewBox="0 0 16 16"><path d="M8 .8c2 1 4 1.500 6 1.600.3 5.600-1.500 10-6 13-4.500-3-6.300-7.400-6-13C4 2.300 6 1.800 8 .8z" fill="#2858d8" stroke="#1c3ca0" stroke-width=".8"/><path d="M8 1.800c1.600.8 3.300 1.200 5 1.300 0 1.400-.1 2.700-.4 3.900H3.400C3.100 5.800 3 4.500 3 3.100c1.700-.1 3.400-.5 5-1.300z" fill="#4a7cf0"/><path d="M5.500 11.300V7C5.500 5.300 6.600 4.300 8 4.300s2.500 1 2.500 2.700v4.300z" fill="#fff"/><rect x="6.600" y="6.300" width="1" height="2" fill="#2858d8"/><rect x="8.400" y="6.300" width="1" height="2" fill="#2858d8"/><ellipse cx="3.300" cy="8.600" rx="1.300" ry="1.500" fill="#e8ecf8"/><ellipse cx="12.700" cy="8.600" rx="1.300" ry="1.500" fill="#e8ecf8"/></svg></span><span class="tt">Свойства: op_mon.exe (384)</span><span class="cb mn" style="left:387px"><i></i></span><span class="cb mx" style="left:410px"><i></i></span><span class="cb cl" style="left:433px"><svg width="21" height="21" viewBox="0 0 21 21"><path d="M6 6l9 9M15 6l-9 9" stroke="#fff" stroke-width="2.200"/></svg></span></div><div class="cli"><span class="tab" style="left:8px;top:9px;width:82px">Modules</span><span class="tab" style="left:91px;top:9px;width:80px">Memory</span><span class="tab" style="left:172px;top:9px;width:102px">Environment</span><span class="tab" style="left:275px;top:9px;width:80px">Handles</span><span class="tab" style="left:356px;top:9px;width:86px">Comment</span><div class="pane" style="left:6px;top:45px;width:436px;height:461px"></div><span class="tab lo" style="left:8px;top:27px;width:81px">General</span><span class="tab seltab" style="left:89px;top:25px;width:92px">Statistics</span><span class="tab lo" style="left:181px;top:27px;width:103px">Performance</span><span class="tab lo" style="left:285px;top:27px;width:84px">Threads</span><span class="tab lo" style="left:369px;top:27px;width:73px">Token</span><fieldset class="gb" style="left:21px;top:57px;width:179px;height:105px"><legend>CPU</legend></fieldset><fieldset class="gb" style="left:21px;top:166px;width:180px;height:209px"><legend>Memory</legend></fieldset><fieldset class="gb" style="left:207px;top:57px;width:183px;height:136px"><legend>I/O</legend></fieldset><fieldset class="gb" style="left:207px;top:196px;width:183px;height:115px"><legend>Other</legend></fieldset><span class="sl" style="left:30px;top:75px">Priority</span><span class="sv" style="left:70px;top:75px">8</span><span class="sl" style="left:30px;top:91px">Cycles</span><span class="sv" style="left:70px;top:91px">N/A</span><span class="sl" style="left:30px;top:107px">Kernel Time</span><span class="sv" style="left:70px;top:107px">00:00:00.340</span><span class="sl" style="left:30px;top:123px">User Time</span><span class="sv" style="left:70px;top:123px">00:00:00.140</span><span class="sl" style="left:30px;top:140px">Total Time</span><span class="sv" style="left:70px;top:140px">00:00:00.480</span><span class="sl" style="left:30px;top:184px">Private Bytes</span><span class="sv" style="left:70px;top:184px">19,71 MB</span><span class="sl" style="left:30px;top:201px">Peak Private Bytes</span><span class="sv" style="left:70px;top:201px">25,01 MB</span><span class="sl" style="left:30px;top:218px">Virtual Size</span><span class="sv" style="left:70px;top:218px">75,55 MB</span><span class="sl" style="left:30px;top:234px">Peak Virtual Size</span><span class="sv" style="left:70px;top:234px">77,87 MB</span><span class="sl" style="left:30px;top:250px">Page Faults</span><span class="sv" style="left:70px;top:250px">15 887</span><span class="sl" style="left:30px;top:268px">Working Set</span><span class="sv" style="left:70px;top:268px">9,43 MB</span><span class="sl" style="left:42px;top:286px">Private WS</span><span class="sv" style="left:70px;top:286px">6,08 MB</span><span class="sl" style="left:42px;top:302px">Shareable WS</span><span class="sv" style="left:70px;top:302px">3,35 MB</span><span class="sl" style="left:42px;top:318px">Shared WS</span><span class="sv" style="left:70px;top:318px">1,87 MB</span><span class="sl" style="left:30px;top:336px">Peak Working Set</span><span class="sv" style="left:70px;top:336px">30,01 MB</span><span class="sl" style="left:30px;top:353px">Page Priority</span><span class="sv" style="left:70px;top:353px">N/A</span><span class="sl" style="left:216px;top:75px">Reads</span><span class="sv" style="left:260px;top:75px">2 560</span><span class="sl" style="left:216px;top:91px">Read Bytes</span><span class="sv" style="left:260px;top:91px">3,84 MB</span><span class="sl" style="left:216px;top:107px">Writes</span><span class="sv" style="left:260px;top:107px">2 183</span><span class="sl" style="left:216px;top:123px">Write Bytes</span><span class="sv" style="left:260px;top:123px">90,36 kB</span><span class="sl" style="left:216px;top:140px">Other</span><span class="sv" style="left:260px;top:140px">10 797</span><span class="sl" style="left:216px;top:156px">Other Bytes</span><span class="sv" style="left:260px;top:156px">84,49 kB</span><span class="sl" style="left:216px;top:172px">I/O Priority</span><span class="sv" style="left:260px;top:172px">N/A</span><span class="sl" style="left:216px;top:213px">Handles</span><span class="sv" style="left:260px;top:213px">118</span><span class="sl" style="left:216px;top:229px">Peak Handles</span><span class="sv" style="left:260px;top:229px">N/A</span><span class="sl" style="left:216px;top:245px">GDI Handles</span><span class="sv" style="left:260px;top:245px">251</span><span class="sl" style="left:216px;top:262px">USER Handles</span><span class="sv" style="left:260px;top:262px">58</span><span class="btn def" style="left:217px;top:280px;width:71px">Details</span><span class="btn" style="left:372px;top:517px;width:71px">Close</span></div></div>
<div id="dlg2" class="dlg ina" style="left:917px;top:214px"><div class="tb"><span class="ti"><svg width="16" height="16" viewBox="0 0 16 16"><rect x="0" y="1" width="16" height="14" fill="#000"/><rect x="0" y="1" width="15" height="13" fill="#808080"/><rect x="1" y="2" width="14" height="12" fill="#404040"/><rect x="1" y="2" width="13" height="11" fill="#fff"/><rect x="2" y="3" width="12" height="10" fill="#c0c0c0"/><rect x="2" y="3" width="11" height="9" fill="#fff"/><rect x="2" y="3" width="12" height="2" fill="#0000c0"/><rect x="8" y="3.500" width="1" height="1" fill="#fff"/><rect x="10" y="3.500" width="1" height="1" fill="#fff"/><rect x="12" y="3.500" width="1" height="1" fill="#fff"/><rect x="0" y="14" width="16" height="1" fill="#000"/></svg></span><span class="tt">Свойства: acs.exe (844)</span><span class="cb mn" style="left:387px"><i></i></span><span class="cb mx" style="left:410px"><i></i></span><span class="cb cl" style="left:433px"><svg width="21" height="21" viewBox="0 0 21 21"><path d="M6 6l9 9M15 6l-9 9" stroke="#fff" stroke-width="2.200"/></svg></span></div><div class="cli"><span class="tab" style="left:8px;top:9px;width:80px">Memory</span><span class="tab" style="left:89px;top:9px;width:102px">Environment</span><span class="tab" style="left:192px;top:9px;width:80px">Handles</span><span class="tab" style="left:273px;top:9px;width:82px">Services</span><span class="tab" style="left:356px;top:9px;width:86px">Comment</span><div class="pane" style="left:6px;top:45px;width:436px;height:461px"></div><span class="tab lo" style="left:8px;top:27px;width:67px">General</span><span class="tab seltab" style="left:75px;top:25px;width:78px">Statistics</span><span class="tab lo" style="left:153px;top:27px;width:89px">Performance</span><span class="tab lo" style="left:243px;top:27px;width:69px">Threads</span><span class="tab lo" style="left:313px;top:27px;width:60px">Token</span><span class="tab lo" style="left:374px;top:27px;width:68px">Modules</span><fieldset class="gb" style="left:21px;top:57px;width:179px;height:105px"><legend>CPU</legend></fieldset><fieldset class="gb" style="left:21px;top:166px;width:180px;height:209px"><legend>Memory</legend></fieldset><fieldset class="gb" style="left:207px;top:57px;width:183px;height:136px"><legend>I/O</legend></fieldset><fieldset class="gb" style="left:207px;top:196px;width:183px;height:115px"><legend>Other</legend></fieldset><span class="sl" style="left:30px;top:75px">Priority</span><span class="sv" style="left:70px;top:75px">8</span><span class="sl" style="left:30px;top:91px">Cycles</span><span class="sv" style="left:70px;top:91px">N/A</span><span class="sl" style="left:30px;top:107px">Kernel Time</span><span class="sv" style="left:70px;top:107px">00:00:01.351</span><span class="sl" style="left:30px;top:123px">User Time</span><span class="sv" style="left:70px;top:123px">00:00:00.781</span><span class="sl" style="left:30px;top:140px">Total Time</span><span class="sv" style="left:70px;top:140px">00:00:02.133</span><span class="sl" style="left:30px;top:184px">Private Bytes</span><span class="sv" style="left:70px;top:184px">36,31 MB</span><span class="sl" style="left:30px;top:201px">Peak Private Bytes</span><span class="sv" style="left:70px;top:201px">43,7 MB</span><span class="sl" style="left:30px;top:218px">Virtual Size</span><span class="sv" style="left:70px;top:218px">146,44 MB</span><span class="sl" style="left:30px;top:234px">Peak Virtual Size</span><span class="sv" style="left:70px;top:234px">165,87 MB</span><span class="sl" style="left:30px;top:250px">Page Faults</span><span class="sv" style="left:70px;top:250px">58 016</span><span class="sl" style="left:30px;top:268px">Working Set</span><span class="sv" style="left:70px;top:268px">40,53 MB</span><span class="sl" style="left:42px;top:286px">Private WS</span><span class="sv" style="left:70px;top:286px">30,86 MB</span><span class="sl" style="left:42px;top:302px">Shareable WS</span><span class="sv" style="left:70px;top:302px">9,67 MB</span><span class="sl" style="left:42px;top:318px">Shared WS</span><span class="sv" style="left:70px;top:318px">5,73 MB</span><span class="sl" style="left:30px;top:336px">Peak Working Set</span><span class="sv" style="left:70px;top:336px">57,99 MB</span><span class="sl" style="left:30px;top:353px">Page Priority</span><span class="sv" style="left:70px;top:353px">N/A</span><span class="sl" style="left:216px;top:75px">Reads</span><span class="sv" style="left:260px;top:75px">5 297</span><span class="sl" style="left:216px;top:91px">Read Bytes</span><span class="sv" style="left:260px;top:91px">18,83 MB</span><span class="sl" style="left:216px;top:107px">Writes</span><span class="sv" style="left:260px;top:107px">3 996</span><span class="sl" style="left:216px;top:123px">Write Bytes</span><span class="sv" style="left:260px;top:123px">1,86 MB</span><span class="sl" style="left:216px;top:140px">Other</span><span class="sv" style="left:260px;top:140px">50 836</span><span class="sl" style="left:216px;top:156px">Other Bytes</span><span class="sv" style="left:260px;top:156px">20,52 MB</span><span class="sl" style="left:216px;top:172px">I/O Priority</span><span class="sv" style="left:260px;top:172px">N/A</span><span class="sl" style="left:216px;top:213px">Handles</span><span class="sv" style="left:260px;top:213px">625</span><span class="sl" style="left:216px;top:229px">Peak Handles</span><span class="sv" style="left:260px;top:229px">N/A</span><span class="sl" style="left:216px;top:245px">GDI Handles</span><span class="sv" style="left:260px;top:245px">4</span><span class="sl" style="left:216px;top:262px">USER Handles</span><span class="sv" style="left:260px;top:262px">0</span><span class="btn" style="left:217px;top:280px;width:71px">Details</span><span class="btn" style="left:372px;top:517px;width:71px">Close</span></div></div>
</div></body></html>
